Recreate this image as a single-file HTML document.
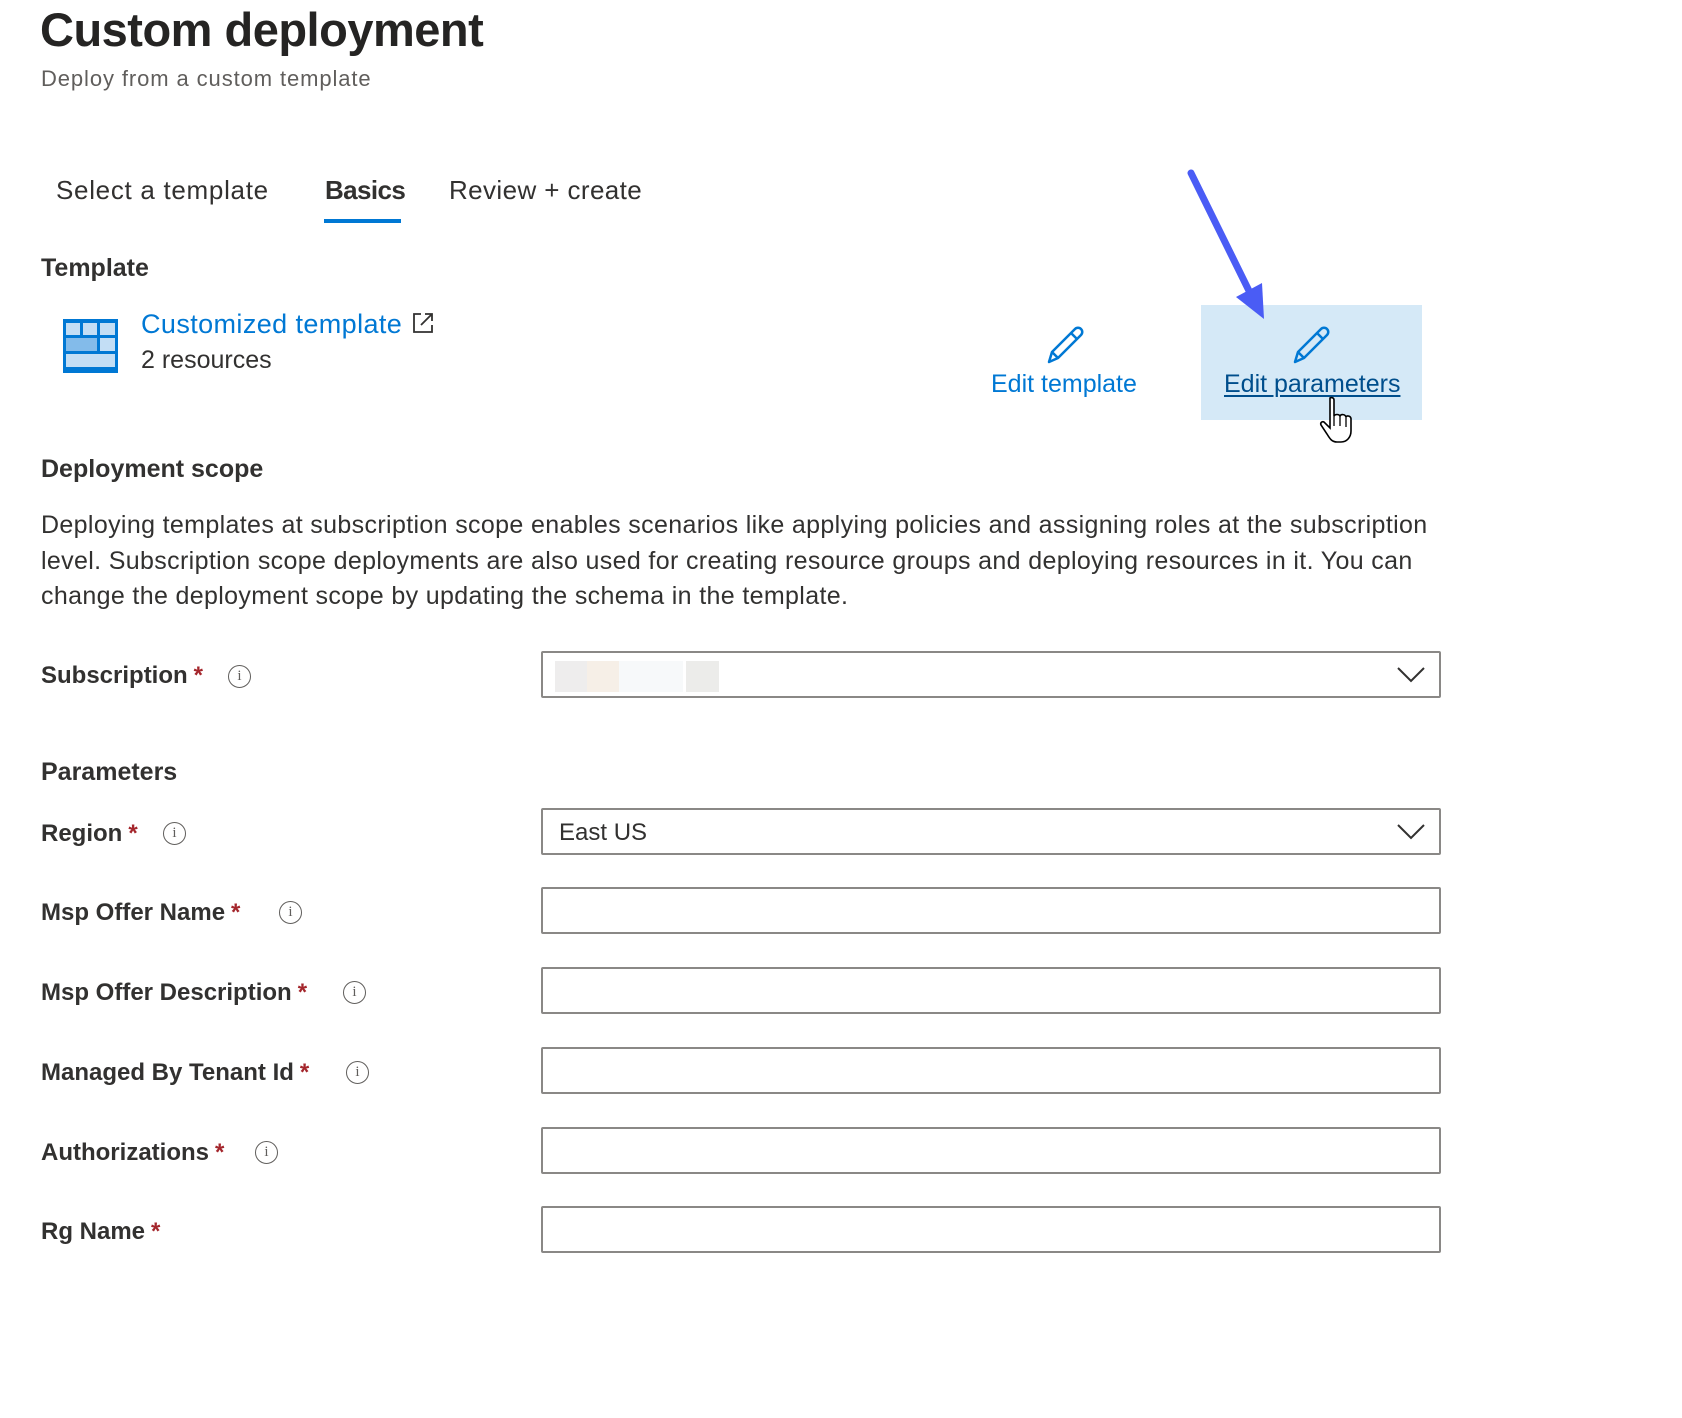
<!DOCTYPE html>
<html><head><meta charset="utf-8"><style>
*{margin:0;padding:0;box-sizing:border-box}
body{width:1682px;height:1418px;background:#fff;font-family:"Liberation Sans",sans-serif;color:#323130;position:relative;overflow:hidden}
.a{position:absolute;white-space:nowrap}
.lbl{font-size:24px;font-weight:bold;color:#323130}
.lbl .s{color:#a4262c;margin-left:6px}
.info{position:absolute;width:23px;height:23px;border:1.5px solid #605e5c;border-radius:50%;font-size:15px;text-align:center;line-height:20px;color:#605e5c;font-family:"Liberation Serif",serif}
.box{position:absolute;left:541px;width:900px;height:47px;border:2px solid #8a8886;border-radius:2px;background:#fff}
.chev{position:absolute;right:14px;top:13px}
h2{font-size:25px;font-weight:bold}
</style></head><body>
<div class="a" style="left:40px;top:2px;font-size:47px;font-weight:bold;color:#252423;letter-spacing:-0.5px">Custom deployment</div>
<div class="a" style="left:41px;top:66px;font-size:22px;color:#605e5c;letter-spacing:0.9px">Deploy from a custom template</div>

<div class="a" style="left:56px;top:175px;font-size:26px;letter-spacing:0.7px">Select a template</div>
<div class="a" style="left:325px;top:175px;font-size:26px;font-weight:bold;letter-spacing:-0.6px">Basics</div>
<div style="position:absolute;left:324px;top:219px;width:77px;height:4px;background:#0078d4"></div>
<div class="a" style="left:449px;top:175px;font-size:26px;letter-spacing:0.4px">Review + create</div>

<h2 class="a" style="left:41px;top:254px">Template</h2>
<svg class="a" style="left:63px;top:319px" width="55" height="54" viewBox="0 0 55 54">
<rect x="0" y="0" width="55" height="54" fill="#0078d4"/>
<rect x="3" y="4" width="14" height="12" fill="#c3def5"/><rect x="20" y="4" width="14" height="12" fill="#c3def5"/><rect x="37" y="4" width="15" height="12" fill="#c3def5"/>
<rect x="3" y="19" width="31" height="13" fill="#83bbea"/><rect x="37" y="19" width="15" height="13" fill="#c3def5"/>
<rect x="3" y="35" width="49" height="13" fill="#c3def5"/>
</svg>
<div class="a" style="left:141px;top:309px;font-size:27px;color:#0078d4;letter-spacing:0.4px">Customized template</div>
<svg class="a" style="left:412px;top:312px" width="22" height="22" viewBox="0 0 22 22" fill="none" stroke="#323130" stroke-width="1.8"><path d="M9 2H2v18h18v-7"/><path d="M13 2h7v7M20 2L9 13"/></svg>
<div class="a" style="left:141px;top:346px;font-size:25px">2 resources</div>

<svg class="a" style="left:1045px;top:324px" width="42" height="42" viewBox="0 0 42 42" fill="none" stroke="#0078d4" stroke-width="2.5" stroke-linejoin="round"><path d="M4 38l3-10L30 5a4 4 0 0 1 6 6L13 34z M26 9l6 6 M7 28l6 6"/></svg>
<div class="a" style="left:991px;top:370px;font-size:25px;color:#0078d4">Edit template</div>

<div style="position:absolute;left:1201px;top:305px;width:221px;height:115px;background:#d5e9f7"></div>
<svg class="a" style="left:1291px;top:324px" width="42" height="42" viewBox="0 0 42 42" fill="none" stroke="#0078d4" stroke-width="2.5" stroke-linejoin="round"><path d="M4 38l3-10L30 5a4 4 0 0 1 6 6L13 34z M26 9l6 6 M7 28l6 6"/></svg>
<div class="a" style="left:1224px;top:370px;font-size:25px;color:#004e8c;text-decoration:underline;text-decoration-thickness:2px;text-underline-offset:3px">Edit parameters</div>
<svg class="a" style="left:1180px;top:165px" width="100" height="160" viewBox="0 0 100 160"><path d="M11 8L75 138" stroke="#4a5cf5" stroke-width="7" stroke-linecap="round"/><path d="M56 132L84 154L82 118Z" fill="#4a5cf5"/></svg>
<svg class="a" style="left:1318px;top:396px" width="40" height="50" viewBox="0 0 40 50"><path d="M12 2c2-1 4 0 4 2v16c1-2 5-2 6 0 1-2 5-2 6 1 1-2 5-1 5 2v12c0 6-4 11-10 11h-4c-5 0-7-3-10-8L3 29c-1-2 1-4 3-3l6 6V4z" fill="#fff" stroke="#000" stroke-width="1.6"/><path d="M16 20v10M22 20v10M28 22v9" stroke="#000" stroke-width="1.3"/></svg>

<h2 class="a" style="left:41px;top:455px">Deployment scope</h2>
<div class="a" style="left:41px;top:508px;font-size:25px;line-height:35.5px;letter-spacing:0.35px">Deploying templates at subscription scope enables scenarios like applying policies and assigning roles at the subscription<br>level. Subscription scope deployments are also used for creating resource groups and deploying resources in it. You can<br>change the deployment scope by updating the schema in the template.</div>

<div class="a lbl" style="left:41px;top:662px">Subscription<span class="s">*</span></div>
<div class="info" style="left:228px;top:665px">i</div>
<div class="box" style="top:651px">
<div style="position:absolute;left:12px;top:8px;width:32px;height:31px;background:#eeeded"></div>
<div style="position:absolute;left:44px;top:8px;width:32px;height:31px;background:#f6efe7"></div>
<div style="position:absolute;left:76px;top:8px;width:64px;height:31px;background:#f7f9fa"></div>
<div style="position:absolute;left:143px;top:8px;width:33px;height:31px;background:#ececea"></div>
<svg class="chev" width="28" height="18" viewBox="0 0 28 18"><path d="M1 2l13 13L27 2" fill="none" stroke="#323130" stroke-width="2"/></svg></div>

<h2 class="a" style="left:41px;top:758px">Parameters</h2>

<div class="a lbl" style="left:41px;top:820px">Region<span class="s">*</span></div>
<div class="info" style="left:163px;top:822px">i</div>
<div class="box" style="top:808px"><div class="a" style="left:16px;top:9px;font-size:24px">East US</div>
<svg class="chev" width="28" height="18" viewBox="0 0 28 18"><path d="M1 2l13 13L27 2" fill="none" stroke="#323130" stroke-width="2"/></svg></div>

<div class="a lbl" style="left:41px;top:899px">Msp Offer Name<span class="s">*</span></div>
<div class="info" style="left:279px;top:901px">i</div>
<div class="box" style="top:887px"></div>

<div class="a lbl" style="left:41px;top:979px">Msp Offer Description<span class="s">*</span></div>
<div class="info" style="left:343px;top:981px">i</div>
<div class="box" style="top:967px"></div>

<div class="a lbl" style="left:41px;top:1059px">Managed By Tenant Id<span class="s">*</span></div>
<div class="info" style="left:346px;top:1061px">i</div>
<div class="box" style="top:1047px"></div>

<div class="a lbl" style="left:41px;top:1139px">Authorizations<span class="s">*</span></div>
<div class="info" style="left:255px;top:1141px">i</div>
<div class="box" style="top:1127px"></div>

<div class="a lbl" style="left:41px;top:1218px">Rg Name<span class="s">*</span></div>
<div class="box" style="top:1206px"></div>
</body></html>
